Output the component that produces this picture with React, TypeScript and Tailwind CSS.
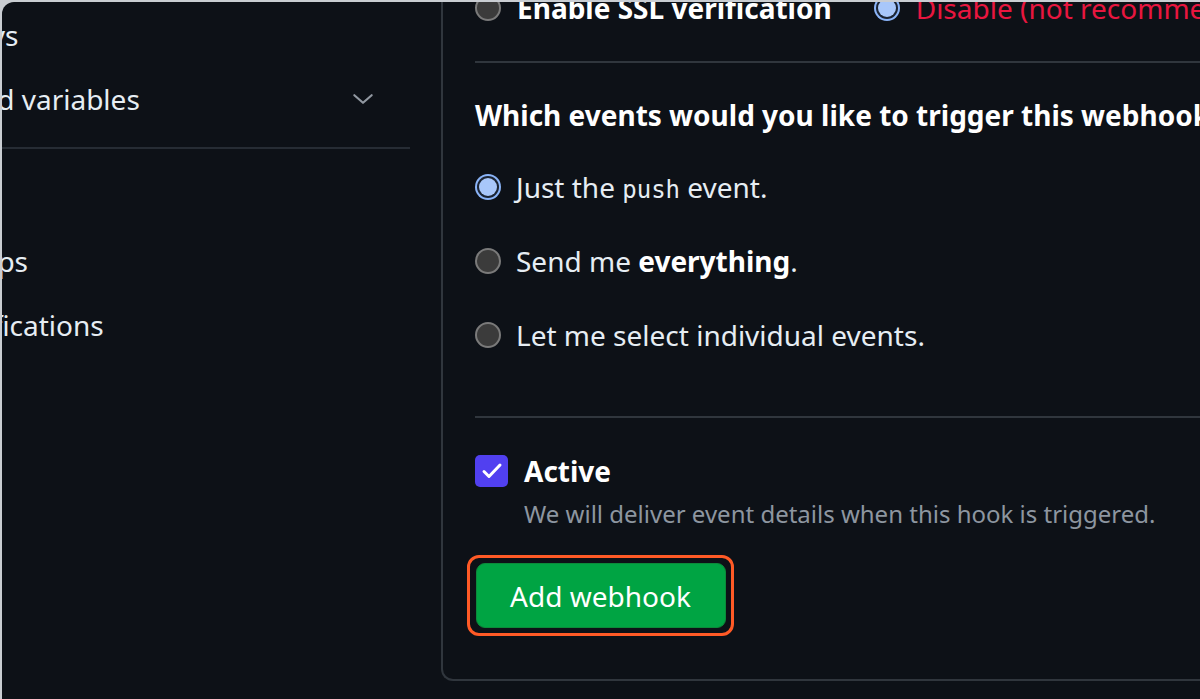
import React from "react";

const font = { fontFamily: '"Noto Sans", "Open Sans", sans-serif' };

function Radio({ checked }: { checked?: boolean }) {
  if (checked) {
    return (
      <span className="flex h-[26px] w-[26px] shrink-0 items-center justify-center rounded-full bg-[#8ab4f8] p-[2px]">
        <span className="flex h-full w-full items-center justify-center rounded-full bg-[#1b2433] p-[2px]">
          <span className="h-full w-full rounded-full bg-[#a8c7fa]" />
        </span>
      </span>
    );
  }
  return (
    <span className="h-[26px] w-[26px] shrink-0 rounded-full border-2 border-[#7a7a7a] bg-[#3b3b3b]" />
  );
}

function SideItem({ label, chevron }: { label: string; chevron?: boolean }) {
  return (
    <div className="flex h-[64px] items-center justify-between pr-[34px]">
      <span className="whitespace-nowrap text-[28px] text-[#e6edf3]">{label}</span>
      {chevron && (
        <svg width="26" height="26" viewBox="0 0 24 24" fill="none" stroke="#9198a1" strokeWidth="2" strokeLinecap="round" strokeLinejoin="round">
          <path d="M4 8.5l8 7 8-7" />
        </svg>
      )}
    </div>
  );
}

export default function App() {
  return (
    <div className="h-[699px] w-[1200px] overflow-hidden bg-[#c9cdd2] pl-[2px] pt-[2px]" style={font}>
      <div className="flex h-[697px] overflow-hidden rounded-tl-[12px] bg-[#0d1117]">
        {/* sidebar, scrolled off to the left */}
        <aside className="w-[408px] shrink-0 overflow-hidden">
          <div className="-ml-[140px] mt-[1px]">
            <SideItem label="Deploy keys" />
            <SideItem label="Secrets and variables" chevron />
          </div>
          <div className="mt-[16px] h-[2px] bg-[#262c34]" />
          <div className="-ml-[140px] mt-[80px]">
            <SideItem label="GitHub Apps" />
            <SideItem label="Email notifications" />
          </div>
        </aside>

        {/* webhook form box */}
        <section className="ml-[31px] h-[679px] w-[900px] shrink-0 rounded-bl-[12px] border-b-2 border-l-2 border-[#30363d] pl-[32px]">
          <div className="-mt-[10px] flex h-[32px] items-center">
            <Radio />
            <span className="ml-[16px] whitespace-nowrap text-[28px] font-bold text-white">Enable SSL verification</span>
            <span className="ml-[42px]">
              <Radio checked />
            </span>
            <span className="ml-[16px] whitespace-nowrap text-[28px] text-[#e8163f]">
              Disable (not recommended)
            </span>
          </div>

          <div className="mt-[37px] h-[2px] bg-[#30363d]" />

          <h2 className="mt-[34px] whitespace-nowrap text-[28px] leading-[36px] font-bold text-white">
            Which events would you like to trigger this webhook?
          </h2>

          <div className="mt-[36px] flex flex-col gap-[38px] text-[28px] text-[#e6edf3]">
            <label className="flex h-[36px] items-center gap-[15px]">
              <Radio checked />
              <span>
                Just the{" "}
                <code className="text-[24px]" style={{ fontFamily: '"DejaVu Sans Mono", monospace' }}>
                  push
                </code>{" "}
                event.
              </span>
            </label>
            <label className="flex h-[36px] items-center gap-[15px]">
              <Radio />
              <span>
                Send me <b className="font-bold text-white">everything</b>.
              </span>
            </label>
            <label className="flex h-[36px] items-center gap-[15px]">
              <Radio />
              <span>Let me select individual events.</span>
            </label>
          </div>

          <div className="mt-[63px] h-[2px] bg-[#30363d]" />

          <div className="mt-[35px] flex h-[36px] items-center gap-[16px]">
            <span className="flex h-[32px] w-[33px] items-center justify-center rounded-[5px] bg-[#5140f0]">
              <svg width="24" height="24" viewBox="0 0 24 24" fill="none" stroke="white" strokeWidth="3" strokeLinecap="round" strokeLinejoin="round">
                <path d="M4 12.5l5 5L20 6" />
              </svg>
            </span>
            <span className="text-[28px] font-bold text-white">Active</span>
          </div>
          <p className="ml-[49px] mt-[10px] whitespace-nowrap text-[24px] leading-[30px] text-[#8d96a0]">
            We will deliver event details when this hook is triggered.
          </p>

          <div className="-ml-[8px] mt-[26px] flex h-[81px] w-[267px] items-center justify-center rounded-[12px] border-[3px] border-[#ff5a26]">
            <button className="h-[65px] w-[250px] rounded-[9px] border border-[#0c8a3a] bg-[#00a443] text-[28px] text-white">
              Add webhook
            </button>
          </div>
        </section>
      </div>
    </div>
  );
}
